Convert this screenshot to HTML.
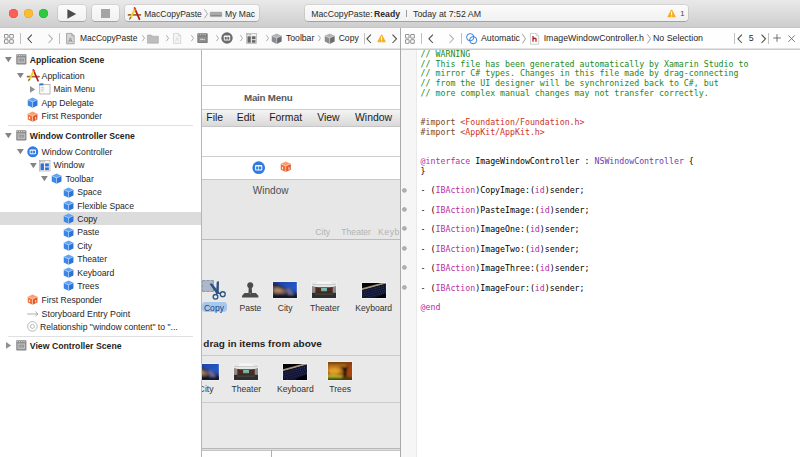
<!DOCTYPE html>
<html>
<head>
<meta charset="utf-8">
<title>Xcode</title>
<style>
html,body{margin:0;padding:0;}
body{width:800px;height:457px;overflow:hidden;background:#fff;position:relative;font-family:"Liberation Sans",sans-serif;font-size:8.7px;color:#2a2a2a;}
.abs{position:absolute;}
svg{display:block;overflow:visible;}
.pic{overflow:hidden;box-shadow:0 0 0 0.6px rgba(255,255,255,.55);}
.t{position:absolute;white-space:nowrap;line-height:14px;height:14px;}
#titlebar{left:0;top:0;width:800px;height:27px;background:linear-gradient(#e9e9e9,#cecece);border-bottom:1px solid #c6c6c6;}
.btn{position:absolute;top:5.2px;height:16.3px;border-radius:3.2px;background:linear-gradient(#fbfbfb,#f1f1f1);box-shadow:0 0 0 0.5px rgba(0,0,0,.16),0 0.8px 0.6px rgba(0,0,0,.22);box-sizing:border-box;}
#jumpL{left:0;top:28px;width:400px;height:20px;background:#fbfbfb;border-bottom:1px solid #e3e3e3;}
#jumpR{left:401px;top:28px;width:399px;height:20px;background:#fefefe;border-bottom:1px solid #e3e3e3;}
#outline{left:0;top:50px;width:201px;height:407px;background:#fff;}
#canvas{left:201px;top:50px;width:200px;height:407px;background:#fff;border-left:1px solid #b5b5b5;box-sizing:border-box;}
#gutter{left:401px;top:50px;width:16px;height:407px;background:#f6f6f6;border-right:1px solid #e9e9e9;box-sizing:border-box;}
pre{margin:0;position:absolute;left:420.6px;top:49.8px;font-family:"DejaVu Sans Mono","Liberation Mono",monospace;font-size:8.25px;line-height:9.75px;color:#000;}
.c{color:#1b8a1b}.k{color:#b630a0}.s{color:#cf3327}.n{color:#6a3db3}.p{color:#78492a}
</style>
</head>
<body>
<div id="titlebar" class="abs"></div>
<div class="abs" style="left:9.00px;top:9.00px;width:9.40px;height:9.40px;border-radius:50%;background:#fc5f58;box-shadow:inset 0 0 0 0.5px #e2453f;"></div>
<div class="abs" style="left:24.00px;top:9.00px;width:9.40px;height:9.40px;border-radius:50%;background:#fdbd30;box-shadow:inset 0 0 0 0.5px #dfa023;"></div>
<div class="abs" style="left:39.00px;top:9.00px;width:9.40px;height:9.40px;border-radius:50%;background:#2ac940;box-shadow:inset 0 0 0 0.5px #1dad2b;"></div>
<div class="btn" style="left:58.0px;width:27.5px"></div>
<div class="btn" style="left:91.5px;width:27.5px"></div>
<div class="btn" style="left:125.0px;width:134.0px"></div>
<div class="btn" style="left:305.0px;width:383.0px"></div>
<svg class="abs" style="left:67.00px;top:8.60px" width="9.50" height="10.00" viewBox="0 0 95 100"><path d="M4 2 L92 50 L4 98 Z" fill="#4b4b4b"/></svg>
<div class="abs" style="left:101.00px;top:9.30px;width:8.60px;height:8.60px;background:#a4a4a4;"></div>
<svg class="abs" style="left:127.90px;top:6.80px" width="12.80" height="12.80" viewBox="0 0 12 12"><path d="M0.4 7.4 H11.7" stroke="#9b6b3c" stroke-width="1.5" stroke-linecap="round"/><path d="M6.1 0.9 L10.7 11.4" stroke="#b3191c" stroke-width="1.6" stroke-linecap="round"/><path d="M6.6 1.6 L2.2 10.6" stroke="#efd02f" stroke-width="1.9"/><path d="M6.9 0.9 L6.2 2.4" stroke="#e2453c" stroke-width="1.9"/><path d="M2.5 10 L1.5 11.8 L1.9 9.7 Z" fill="#6b4a2a" stroke="#6b4a2a" stroke-width="0.5"/></svg>
<div class="t" style="left:144.30px;top:6.60px;font-size:8.49px;color:#2b2b2b;">MacCopyPaste</div>
<svg class="abs" style="left:203.80px;top:8.80px" width="4.00" height="9.60" viewBox="0 0 40 96"><path d="M4 2 L35 48 L4 94" fill="none" stroke="#9a9a9a" stroke-width="8"/></svg>
<svg class="abs" style="left:209.80px;top:12.20px" width="12.00" height="4.80" viewBox="0 0 120 48"><rect x="2" y="2" width="116" height="44" rx="6" fill="#a9a9a9" stroke="#858585" stroke-width="5"/><rect x="8" y="30" width="104" height="10" fill="#8a8a8a"/></svg>
<div class="t" style="left:225.00px;top:6.60px;font-size:8.57px;color:#2b2b2b;">My Mac</div>
<div class="t" style="left:311.30px;top:6.60px;font-size:8.70px;color:#2b2b2b;">MacCopyPaste: </div>
<div class="t" style="left:374.00px;top:6.60px;font-size:8.70px;font-weight:bold;color:#2b2b2b;">Ready</div>
<div class="abs" style="left:406.10px;top:9.70px;width:1.00px;height:7.60px;background:#9c9c9c;"></div>
<div class="t" style="left:413.00px;top:6.60px;font-size:8.80px;color:#2b2b2b;">Today at 7:52 AM</div>
<svg class="abs" style="left:667.20px;top:9.00px" width="9.20" height="8.90" viewBox="0 0 12 11.4"><path d="M6 0.7 Q6.6 0.7 6.9 1.3 L11.3 9.6 Q11.8 10.8 10.6 10.8 L1.4 10.8 Q0.2 10.8 0.7 9.6 L5.1 1.3 Q5.4 0.7 6 0.7 Z" fill="#f6ae24"/><path d="M6 3.6 V7.2" stroke="#fff" stroke-width="1.3" stroke-linecap="round"/><circle cx="6" cy="9" r="0.75" fill="#fff"/></svg>
<div class="t" style="left:680.20px;top:6.80px;font-size:7.60px;color:#444;">1</div>
<div id="jumpL" class="abs"></div>
<div id="jumpR" class="abs"></div>
<div class="abs" style="left:0.00px;top:49.00px;width:800.00px;height:1.00px;background:#cbcbcb;"></div>
<svg class="abs" style="left:4.20px;top:33.60px" width="9.80" height="9.80" viewBox="0 0 12 12"><g fill="none" stroke="#6a6a6a" stroke-width="0.9"><rect x="0.6" y="0.6" width="4.4" height="4.4" rx="0.35"/><rect x="7" y="0.6" width="4.4" height="4.4" rx="0.35"/><rect x="0.6" y="7" width="4.4" height="4.4" rx="0.35"/><rect x="7" y="7" width="4.4" height="4.4" rx="0.35"/></g></svg>
<div class="abs" style="left:20.00px;top:32.60px;width:1.00px;height:11.60px;background:#c0c0c0;"></div>
<svg class="abs" style="left:26.80px;top:33.60px" width="5.40" height="9.60" viewBox="0 0 5.4 9.6"><path d="M4.9 0.6 L0.9 4.8 L4.9 9.0" fill="none" stroke="#4a4a4a" stroke-width="1.05"/></svg>
<svg class="abs" style="left:48.00px;top:33.60px" width="5.40" height="9.60" viewBox="0 0 5.4 9.6"><path d="M0.5 0.6 L4.5 4.8 L0.5 9.0" fill="none" stroke="#b0b0b0" stroke-width="1.05"/></svg>
<div class="abs" style="left:59.20px;top:32.60px;width:1.00px;height:11.60px;background:#c0c0c0;"></div>
<svg class="abs" style="left:66.20px;top:32.80px" width="8.80" height="11.20" viewBox="0 0 88 112"><path d="M6 4 H58 L82 28 V108 H6 Z" fill="#d6d6d6" stroke="#8c8c8c" stroke-width="7"/><path d="M58 4 V28 H82" fill="none" stroke="#8c8c8c" stroke-width="6"/><path d="M26 92 L44 48 L62 92 M32 78 H56" fill="none" stroke="#8a8a8a" stroke-width="8"/></svg>
<div class="t" style="left:80.00px;top:31.40px;font-size:8.48px;color:#1f1f1f;">MacCopyPaste</div>
<svg class="abs" style="left:141.50px;top:35.20px" width="3.00" height="6.40" viewBox="0 0 30 64"><path d="M4 2 L25 32 L4 62" fill="none" stroke="#a6a6a6" stroke-width="9"/></svg>
<svg class="abs" style="left:147.00px;top:33.60px" width="11.80" height="9.60" viewBox="0 0 118 96"><path d="M4 10 H44 L54 22 H114 V92 H4 Z" fill="#bdbdbd" stroke="#9e9e9e" stroke-width="5"/></svg>
<svg class="abs" style="left:166.00px;top:35.20px" width="3.00" height="6.40" viewBox="0 0 30 64"><path d="M4 2 L25 32 L4 62" fill="none" stroke="#a6a6a6" stroke-width="9"/></svg>
<svg class="abs" style="left:173.00px;top:33.00px" width="8.20" height="10.80" viewBox="0 0 82 108"><path d="M5 4 H54 L77 27 V104 H5 Z" fill="#f4f4f4" stroke="#c4c4c4" stroke-width="6"/><path d="M54 4 V27 H77" fill="none" stroke="#c4c4c4" stroke-width="5"/><path d="M26 84 L41 46 L56 84" fill="none" stroke="#d0d0d0" stroke-width="6"/></svg>
<svg class="abs" style="left:191.00px;top:35.20px" width="3.00" height="6.40" viewBox="0 0 30 64"><path d="M4 2 L25 32 L4 62" fill="none" stroke="#a6a6a6" stroke-width="9"/></svg>
<svg class="abs" style="left:197.00px;top:33.20px" width="11.00" height="10.40" viewBox="0 0 110 104"><rect x="3" y="3" width="104" height="98" rx="8" fill="#7a7a7a"/><rect x="14" y="36" width="82" height="54" fill="#8f8f8f"/><path d="M14 18 H98" stroke="#e6e6e6" stroke-width="9" stroke-dasharray="9 8"/><path d="M34 64 H76" stroke="#f0f0f0" stroke-width="14" stroke-dasharray="12 6"/></svg>
<svg class="abs" style="left:215.50px;top:35.20px" width="3.00" height="6.40" viewBox="0 0 30 64"><path d="M4 2 L25 32 L4 62" fill="none" stroke="#a6a6a6" stroke-width="9"/></svg>
<svg class="abs" style="left:221.00px;top:32.20px" width="12.00" height="12.00" viewBox="0 0 12 12"><circle cx="6" cy="6" r="5.7" fill="#6b6b6b"/><rect x="2.8" y="3.5" width="6.4" height="5" rx="0.8" fill="#fff"/><rect x="3.7" y="4.9" width="2" height="2.7" fill="#6b6b6b"/><rect x="6.3" y="4.9" width="2" height="2.7" fill="#6b6b6b"/></svg>
<svg class="abs" style="left:240.30px;top:35.20px" width="3.00" height="6.40" viewBox="0 0 30 64"><path d="M4 2 L25 32 L4 62" fill="none" stroke="#a6a6a6" stroke-width="9"/></svg>
<svg class="abs" style="left:246.00px;top:33.00px" width="11.00" height="11.00" viewBox="0 0 12 12"><rect x="0.4" y="0.4" width="11.2" height="11.2" fill="#f1f1f1" stroke="#a8a8a8" stroke-width="0.7"/><circle cx="1.9" cy="1.8" r="0.55" fill="#777"/><circle cx="3.5" cy="1.8" r="0.55" fill="#777"/><circle cx="5.1" cy="1.8" r="0.55" fill="#777"/><rect x="1.6" y="3.6" width="3.6" height="7" fill="#666"/><rect x="6.4" y="3.6" width="4" height="3.2" fill="#666"/><rect x="6.4" y="7.8" width="4" height="2.8" fill="#666"/></svg>
<svg class="abs" style="left:265.50px;top:35.20px" width="3.00" height="6.40" viewBox="0 0 30 64"><path d="M4 2 L25 32 L4 62" fill="none" stroke="#a6a6a6" stroke-width="9"/></svg>
<svg class="abs" style="left:271.00px;top:32.80px" width="11.40" height="11.40" viewBox="0 0 12 12"><path d="M6 0.6 L11.2 2.9 L6 5.3 L0.8 2.9 Z" fill="#b4b4b4"/><path d="M0.8 2.9 L6 5.3 L6 11.5 L0.8 9 Z" fill="#8b8b8b"/><path d="M11.2 2.9 L6 5.3 L6 11.5 L11.2 9 Z" fill="#6c6c6c"/><path d="M0.8 2.9 L6 5.3 L11.2 2.9 M6 5.3 L6 11.5" stroke="#cfe4ff" stroke-width="0.75" fill="none" opacity="0.75"/></svg>
<div class="t" style="left:286.00px;top:31.40px;font-size:8.63px;color:#1f1f1f;">Toolbar</div>
<svg class="abs" style="left:318.00px;top:35.20px" width="3.00" height="6.40" viewBox="0 0 30 64"><path d="M4 2 L25 32 L4 62" fill="none" stroke="#a6a6a6" stroke-width="9"/></svg>
<svg class="abs" style="left:324.00px;top:32.80px" width="11.40" height="11.40" viewBox="0 0 12 12"><path d="M6 0.6 L11.2 2.9 L6 5.3 L0.8 2.9 Z" fill="#b4b4b4"/><path d="M0.8 2.9 L6 5.3 L6 11.5 L0.8 9 Z" fill="#8b8b8b"/><path d="M11.2 2.9 L6 5.3 L6 11.5 L11.2 9 Z" fill="#6c6c6c"/><path d="M0.8 2.9 L6 5.3 L11.2 2.9 M6 5.3 L6 11.5" stroke="#cfe4ff" stroke-width="0.75" fill="none" opacity="0.75"/></svg>
<div class="t" style="left:338.70px;top:31.40px;font-size:8.57px;color:#1f1f1f;">Copy</div>
<div class="abs" style="left:363.60px;top:32.60px;width:1.00px;height:11.60px;background:#c0c0c0;"></div>
<svg class="abs" style="left:366.20px;top:33.60px" width="5.40" height="9.60" viewBox="0 0 5.4 9.6"><path d="M4.9 0.6 L0.9 4.8 L4.9 9.0" fill="none" stroke="#4a4a4a" stroke-width="1.05"/></svg>
<svg class="abs" style="left:377.40px;top:33.90px" width="9.20" height="8.90" viewBox="0 0 12 11.4"><path d="M6 0.7 Q6.6 0.7 6.9 1.3 L11.3 9.6 Q11.8 10.8 10.6 10.8 L1.4 10.8 Q0.2 10.8 0.7 9.6 L5.1 1.3 Q5.4 0.7 6 0.7 Z" fill="#f6ae24"/><path d="M6 3.6 V7.2" stroke="#fff" stroke-width="1.3" stroke-linecap="round"/><circle cx="6" cy="9" r="0.75" fill="#fff"/></svg>
<svg class="abs" style="left:392.00px;top:33.60px" width="5.40" height="9.60" viewBox="0 0 5.4 9.6"><path d="M0.5 0.6 L4.5 4.8 L0.5 9.0" fill="none" stroke="#4a4a4a" stroke-width="1.05"/></svg>
<svg class="abs" style="left:405.40px;top:33.60px" width="9.80" height="9.80" viewBox="0 0 12 12"><g fill="none" stroke="#6a6a6a" stroke-width="0.9"><rect x="0.6" y="0.6" width="4.4" height="4.4" rx="0.35"/><rect x="7" y="0.6" width="4.4" height="4.4" rx="0.35"/><rect x="0.6" y="7" width="4.4" height="4.4" rx="0.35"/><rect x="7" y="7" width="4.4" height="4.4" rx="0.35"/></g></svg>
<div class="abs" style="left:421.00px;top:32.60px;width:1.00px;height:11.60px;background:#c0c0c0;"></div>
<svg class="abs" style="left:428.00px;top:33.60px" width="5.40" height="9.60" viewBox="0 0 5.4 9.6"><path d="M4.9 0.6 L0.9 4.8 L4.9 9.0" fill="none" stroke="#4a4a4a" stroke-width="1.05"/></svg>
<svg class="abs" style="left:449.00px;top:33.60px" width="5.40" height="9.60" viewBox="0 0 5.4 9.6"><path d="M0.5 0.6 L4.5 4.8 L0.5 9.0" fill="none" stroke="#b0b0b0" stroke-width="1.05"/></svg>
<div class="abs" style="left:461.00px;top:32.60px;width:1.00px;height:11.60px;background:#c0c0c0;"></div>
<svg class="abs" style="left:466.00px;top:32.80px" width="11.40" height="11.40" viewBox="0 0 114 114"><circle cx="42" cy="42" r="36" fill="none" stroke="#2f7be0" stroke-width="10"/><circle cx="72" cy="72" r="36" fill="none" stroke="#2f7be0" stroke-width="10"/></svg>
<div class="t" style="left:481.00px;top:31.40px;font-size:8.77px;color:#1f1f1f;">Automatic</div>
<svg class="abs" style="left:522.00px;top:33.60px" width="4.00" height="9.60" viewBox="0 0 40 96"><path d="M4 2 L35 48 L4 94" fill="none" stroke="#868686" stroke-width="8"/></svg>
<svg class="abs" style="left:530.40px;top:32.60px" width="9.20" height="11.60" viewBox="0 0 92 116"><path d="M5 4 H62 L87 29 V112 H5 Z" fill="#fff" stroke="#b0b0b0" stroke-width="6"/><path d="M62 4 V29 H87" fill="none" stroke="#b0b0b0" stroke-width="5"/><path d="M30 30 V88 M30 62 Q46 46 60 58 V88" fill="none" stroke="#b4202b" stroke-width="13"/></svg>
<div class="t" style="left:543.70px;top:31.40px;font-size:8.76px;color:#1f1f1f;">ImageWindowController.h</div>
<svg class="abs" style="left:647.00px;top:33.60px" width="4.00" height="9.60" viewBox="0 0 40 96"><path d="M4 2 L35 48 L4 94" fill="none" stroke="#868686" stroke-width="8"/></svg>
<div class="t" style="left:653.00px;top:31.40px;font-size:8.82px;color:#1f1f1f;">No Selection</div>
<div class="abs" style="left:733.60px;top:32.60px;width:1.00px;height:11.60px;background:#c0c0c0;"></div>
<svg class="abs" style="left:737.40px;top:33.60px" width="5.40" height="9.60" viewBox="0 0 5.4 9.6"><path d="M4.9 0.6 L0.9 4.8 L4.9 9.0" fill="none" stroke="#4a4a4a" stroke-width="1.05"/></svg>
<div class="t" style="left:748.80px;top:31.40px;font-size:8.80px;color:#2b2b2b;">5</div>
<svg class="abs" style="left:760.60px;top:33.60px" width="5.40" height="9.60" viewBox="0 0 5.4 9.6"><path d="M0.5 0.6 L4.5 4.8 L0.5 9.0" fill="none" stroke="#4a4a4a" stroke-width="1.05"/></svg>
<div class="abs" style="left:768.00px;top:32.60px;width:1.00px;height:11.60px;background:#c0c0c0;"></div>
<svg class="abs" style="left:773.00px;top:34.40px" width="8.00" height="8.00" viewBox="0 0 80 80"><path d="M40 2 V78 M2 40 H78" stroke="#5a5a5a" stroke-width="8.5"/></svg>
<svg class="abs" style="left:788.00px;top:34.80px" width="7.20" height="7.20" viewBox="0 0 72 72"><path d="M4 4 L68 68 M68 4 L4 68" stroke="#6a6a6a" stroke-width="9"/></svg>
<div id="outline" class="abs"></div>
<div class="abs" style="left:0.00px;top:212.20px;width:201.00px;height:13.20px;background:#dcdcdc;"></div>
<div class="abs" style="left:7.50px;top:125.20px;width:185.00px;height:1.00px;background:#e0e0e0;"></div>
<div class="abs" style="left:7.50px;top:335.90px;width:185.00px;height:1.00px;background:#e0e0e0;"></div>
<svg class="abs" style="left:5.20px;top:56.80px" width="6.80" height="5.20" viewBox="0 0 68 52"><path d="M0 0 L68 0 L34 52 Z" fill="#848484"/></svg>
<svg class="abs" style="left:15.80px;top:54.00px" width="10.70" height="10.70" viewBox="0 0 12 12"><rect x="0.3" y="0.3" width="11.4" height="11.4" rx="0.8" fill="#858585"/><rect x="1.7" y="3.8" width="8.6" height="6.5" fill="#bdbdbd"/><path d="M1.4 1.9 H10.6" stroke="#ececec" stroke-width="1.1" stroke-dasharray="1.1 0.9"/><rect x="3.1" y="5.4" width="5.8" height="3" fill="#8a8a8a"/><path d="M3.8 6.9 H8.2" stroke="#e8e8e8" stroke-width="0.9" stroke-dasharray="0.9 0.8"/></svg>
<div class="t" style="left:29.80px;top:52.70px;font-size:8.61px;font-weight:bold;color:#1f1f1f;">Application Scene</div>
<svg class="abs" style="left:17.40px;top:73.00px" width="6.80" height="5.20" viewBox="0 0 68 52"><path d="M0 0 L68 0 L34 52 Z" fill="#848484"/></svg>
<svg class="abs" style="left:26.90px;top:69.40px" width="12.40" height="12.40" viewBox="0 0 12 12"><path d="M0.4 7.4 H11.7" stroke="#9b6b3c" stroke-width="1.5" stroke-linecap="round"/><path d="M6.1 0.9 L10.7 11.4" stroke="#b3191c" stroke-width="1.6" stroke-linecap="round"/><path d="M6.6 1.6 L2.2 10.6" stroke="#efd02f" stroke-width="1.9"/><path d="M6.9 0.9 L6.2 2.4" stroke="#e2453c" stroke-width="1.9"/><path d="M2.5 10 L1.5 11.8 L1.9 9.7 Z" fill="#6b4a2a" stroke="#6b4a2a" stroke-width="0.5"/></svg>
<div class="t" style="left:41.60px;top:68.60px;font-size:8.81px;color:#262626;">Application</div>
<svg class="abs" style="left:30.40px;top:85.60px" width="5.20" height="6.80" viewBox="0 0 52 68"><path d="M0 0 L52 34 L0 68 Z" fill="#909090"/></svg>
<svg class="abs" style="left:39.00px;top:82.80px" width="11.60" height="11.60" viewBox="0 0 12 12"><rect x="0.8" y="1.6" width="10.6" height="9.8" fill="#fbfbfb" stroke="#9a9a9a" stroke-width="0.7"/><rect x="0.4" y="0.4" width="4.2" height="2" fill="#2f74d8"/><path d="M2.2 4.6 H5 M2.2 6.4 H5.6 M2.2 8.2 H4.6" stroke="#b5b5b5" stroke-width="0.7"/></svg>
<div class="t" style="left:53.60px;top:82.00px;font-size:8.35px;color:#262626;">Main Menu</div>
<svg class="abs" style="left:27.30px;top:97.10px" width="11.20" height="11.20" viewBox="0 0 12 12"><path d="M6 0.6 L11.2 2.9 L6 5.3 L0.8 2.9 Z" fill="#62a5f2"/><path d="M0.8 2.9 L6 5.3 L6 11.5 L0.8 9 Z" fill="#3c86e8"/><path d="M11.2 2.9 L6 5.3 L6 11.5 L11.2 9 Z" fill="#2b74da"/><path d="M0.8 2.9 L6 5.3 L11.2 2.9 M6 5.3 L6 11.5" stroke="#cfe4ff" stroke-width="0.75" fill="none" opacity="0.75"/></svg>
<div class="t" style="left:41.60px;top:95.80px;font-size:8.60px;color:#262626;">App Delegate</div>
<svg class="abs" style="left:27.30px;top:110.50px" width="11.20" height="11.20" viewBox="0 0 12 12"><path d="M6 0.6 L11.2 2.9 L6 5.3 L0.8 2.9 Z" fill="#f7a072"/><path d="M0.8 2.9 L6 5.3 L6 11.5 L0.8 9 Z" fill="#f0703a"/><path d="M11.2 2.9 L6 5.3 L6 11.5 L11.2 9 Z" fill="#e2572a"/><path d="M0.8 2.9 L6 5.3 L11.2 2.9 M6 5.3 L6 11.5" stroke="#ffe3d3" stroke-width="0.7" fill="none" opacity="0.85"/><path d="M2.6 6.2 L2.6 8.6 M8.6 7.2 L9.4 6.8 L9.4 9.2" stroke="#fff" stroke-width="0.9" fill="none"/></svg>
<div class="t" style="left:41.60px;top:109.20px;font-size:8.53px;color:#262626;">First Responder</div>
<svg class="abs" style="left:5.20px;top:132.70px" width="6.80" height="5.20" viewBox="0 0 68 52"><path d="M0 0 L68 0 L34 52 Z" fill="#848484"/></svg>
<svg class="abs" style="left:15.80px;top:129.90px" width="10.70" height="10.70" viewBox="0 0 12 12"><rect x="0.3" y="0.3" width="11.4" height="11.4" rx="0.8" fill="#858585"/><rect x="1.7" y="3.8" width="8.6" height="6.5" fill="#bdbdbd"/><path d="M1.4 1.9 H10.6" stroke="#ececec" stroke-width="1.1" stroke-dasharray="1.1 0.9"/><rect x="3.1" y="5.4" width="5.8" height="3" fill="#8a8a8a"/><path d="M3.8 6.9 H8.2" stroke="#e8e8e8" stroke-width="0.9" stroke-dasharray="0.9 0.8"/></svg>
<div class="t" style="left:29.80px;top:128.60px;font-size:8.68px;font-weight:bold;color:#1f1f1f;">Window Controller Scene</div>
<svg class="abs" style="left:17.40px;top:149.40px" width="6.80" height="5.20" viewBox="0 0 68 52"><path d="M0 0 L68 0 L34 52 Z" fill="#848484"/></svg>
<svg class="abs" style="left:26.60px;top:146.20px" width="11.60" height="11.60" viewBox="0 0 12 12"><circle cx="6" cy="6" r="5.7" fill="#2f7be0"/><rect x="2.8" y="3.5" width="6.4" height="5" rx="0.8" fill="#fff"/><rect x="3.7" y="4.9" width="2" height="2.7" fill="#2f7be0"/><rect x="6.3" y="4.9" width="2" height="2.7" fill="#2f7be0"/></svg>
<div class="t" style="left:41.60px;top:145.00px;font-size:8.69px;color:#262626;">Window Controller</div>
<svg class="abs" style="left:29.60px;top:162.80px" width="6.80" height="5.20" viewBox="0 0 68 52"><path d="M0 0 L68 0 L34 52 Z" fill="#848484"/></svg>
<svg class="abs" style="left:39.30px;top:159.60px" width="11.40" height="11.40" viewBox="0 0 12 12"><rect x="0.4" y="0.4" width="11.2" height="11.2" fill="#f4f4f4" stroke="#a8a8a8" stroke-width="0.7"/><circle cx="1.9" cy="1.8" r="0.6" fill="#e0443e"/><circle cx="3.6" cy="1.8" r="0.6" fill="#e0a030"/><circle cx="5.3" cy="1.8" r="0.6" fill="#3aa845"/><rect x="1.6" y="3.6" width="3.6" height="7" fill="#2f6fd6"/><rect x="6.4" y="3.6" width="4" height="3.2" fill="#2f6fd6"/><rect x="6.4" y="7.8" width="4" height="2.8" fill="#2f6fd6"/></svg>
<div class="t" style="left:53.60px;top:158.40px;font-size:8.66px;color:#262626;">Window</div>
<svg class="abs" style="left:41.40px;top:176.20px" width="6.80" height="5.20" viewBox="0 0 68 52"><path d="M0 0 L68 0 L34 52 Z" fill="#848484"/></svg>
<svg class="abs" style="left:51.20px;top:173.10px" width="11.20" height="11.20" viewBox="0 0 12 12"><path d="M6 0.6 L11.2 2.9 L6 5.3 L0.8 2.9 Z" fill="#62a5f2"/><path d="M0.8 2.9 L6 5.3 L6 11.5 L0.8 9 Z" fill="#3c86e8"/><path d="M11.2 2.9 L6 5.3 L6 11.5 L11.2 9 Z" fill="#2b74da"/><path d="M0.8 2.9 L6 5.3 L11.2 2.9 M6 5.3 L6 11.5" stroke="#cfe4ff" stroke-width="0.75" fill="none" opacity="0.75"/></svg>
<div class="t" style="left:65.40px;top:171.80px;font-size:8.66px;color:#262626;">Toolbar</div>
<svg class="abs" style="left:63.10px;top:186.50px" width="11.20" height="11.20" viewBox="0 0 12 12"><path d="M6 0.6 L11.2 2.9 L6 5.3 L0.8 2.9 Z" fill="#62a5f2"/><path d="M0.8 2.9 L6 5.3 L6 11.5 L0.8 9 Z" fill="#3c86e8"/><path d="M11.2 2.9 L6 5.3 L6 11.5 L11.2 9 Z" fill="#2b74da"/><path d="M0.8 2.9 L6 5.3 L11.2 2.9 M6 5.3 L6 11.5" stroke="#cfe4ff" stroke-width="0.75" fill="none" opacity="0.75"/></svg>
<div class="t" style="left:77.20px;top:185.20px;font-size:8.66px;color:#262626;">Space</div>
<svg class="abs" style="left:63.10px;top:199.90px" width="11.20" height="11.20" viewBox="0 0 12 12"><path d="M6 0.6 L11.2 2.9 L6 5.3 L0.8 2.9 Z" fill="#62a5f2"/><path d="M0.8 2.9 L6 5.3 L6 11.5 L0.8 9 Z" fill="#3c86e8"/><path d="M11.2 2.9 L6 5.3 L6 11.5 L11.2 9 Z" fill="#2b74da"/><path d="M0.8 2.9 L6 5.3 L11.2 2.9 M6 5.3 L6 11.5" stroke="#cfe4ff" stroke-width="0.75" fill="none" opacity="0.75"/></svg>
<div class="t" style="left:77.20px;top:198.60px;font-size:8.66px;color:#262626;">Flexible Space</div>
<svg class="abs" style="left:63.10px;top:213.30px" width="11.20" height="11.20" viewBox="0 0 12 12"><path d="M6 0.6 L11.2 2.9 L6 5.3 L0.8 2.9 Z" fill="#62a5f2"/><path d="M0.8 2.9 L6 5.3 L6 11.5 L0.8 9 Z" fill="#3c86e8"/><path d="M11.2 2.9 L6 5.3 L6 11.5 L11.2 9 Z" fill="#2b74da"/><path d="M0.8 2.9 L6 5.3 L11.2 2.9 M6 5.3 L6 11.5" stroke="#cfe4ff" stroke-width="0.75" fill="none" opacity="0.75"/></svg>
<div class="t" style="left:77.20px;top:212.00px;font-size:8.66px;color:#262626;">Copy</div>
<svg class="abs" style="left:63.10px;top:226.70px" width="11.20" height="11.20" viewBox="0 0 12 12"><path d="M6 0.6 L11.2 2.9 L6 5.3 L0.8 2.9 Z" fill="#62a5f2"/><path d="M0.8 2.9 L6 5.3 L6 11.5 L0.8 9 Z" fill="#3c86e8"/><path d="M11.2 2.9 L6 5.3 L6 11.5 L11.2 9 Z" fill="#2b74da"/><path d="M0.8 2.9 L6 5.3 L11.2 2.9 M6 5.3 L6 11.5" stroke="#cfe4ff" stroke-width="0.75" fill="none" opacity="0.75"/></svg>
<div class="t" style="left:77.20px;top:225.40px;font-size:8.66px;color:#262626;">Paste</div>
<svg class="abs" style="left:63.10px;top:240.10px" width="11.20" height="11.20" viewBox="0 0 12 12"><path d="M6 0.6 L11.2 2.9 L6 5.3 L0.8 2.9 Z" fill="#62a5f2"/><path d="M0.8 2.9 L6 5.3 L6 11.5 L0.8 9 Z" fill="#3c86e8"/><path d="M11.2 2.9 L6 5.3 L6 11.5 L11.2 9 Z" fill="#2b74da"/><path d="M0.8 2.9 L6 5.3 L11.2 2.9 M6 5.3 L6 11.5" stroke="#cfe4ff" stroke-width="0.75" fill="none" opacity="0.75"/></svg>
<div class="t" style="left:77.20px;top:238.80px;font-size:8.66px;color:#262626;">City</div>
<svg class="abs" style="left:63.10px;top:253.50px" width="11.20" height="11.20" viewBox="0 0 12 12"><path d="M6 0.6 L11.2 2.9 L6 5.3 L0.8 2.9 Z" fill="#62a5f2"/><path d="M0.8 2.9 L6 5.3 L6 11.5 L0.8 9 Z" fill="#3c86e8"/><path d="M11.2 2.9 L6 5.3 L6 11.5 L11.2 9 Z" fill="#2b74da"/><path d="M0.8 2.9 L6 5.3 L11.2 2.9 M6 5.3 L6 11.5" stroke="#cfe4ff" stroke-width="0.75" fill="none" opacity="0.75"/></svg>
<div class="t" style="left:77.20px;top:252.20px;font-size:8.66px;color:#262626;">Theater</div>
<svg class="abs" style="left:63.10px;top:266.90px" width="11.20" height="11.20" viewBox="0 0 12 12"><path d="M6 0.6 L11.2 2.9 L6 5.3 L0.8 2.9 Z" fill="#62a5f2"/><path d="M0.8 2.9 L6 5.3 L6 11.5 L0.8 9 Z" fill="#3c86e8"/><path d="M11.2 2.9 L6 5.3 L6 11.5 L11.2 9 Z" fill="#2b74da"/><path d="M0.8 2.9 L6 5.3 L11.2 2.9 M6 5.3 L6 11.5" stroke="#cfe4ff" stroke-width="0.75" fill="none" opacity="0.75"/></svg>
<div class="t" style="left:77.20px;top:265.60px;font-size:8.66px;color:#262626;">Keyboard</div>
<svg class="abs" style="left:63.10px;top:280.30px" width="11.20" height="11.20" viewBox="0 0 12 12"><path d="M6 0.6 L11.2 2.9 L6 5.3 L0.8 2.9 Z" fill="#62a5f2"/><path d="M0.8 2.9 L6 5.3 L6 11.5 L0.8 9 Z" fill="#3c86e8"/><path d="M11.2 2.9 L6 5.3 L6 11.5 L11.2 9 Z" fill="#2b74da"/><path d="M0.8 2.9 L6 5.3 L11.2 2.9 M6 5.3 L6 11.5" stroke="#cfe4ff" stroke-width="0.75" fill="none" opacity="0.75"/></svg>
<div class="t" style="left:77.20px;top:279.00px;font-size:8.66px;color:#262626;">Trees</div>
<svg class="abs" style="left:27.30px;top:293.90px" width="11.20" height="11.20" viewBox="0 0 12 12"><path d="M6 0.6 L11.2 2.9 L6 5.3 L0.8 2.9 Z" fill="#f7a072"/><path d="M0.8 2.9 L6 5.3 L6 11.5 L0.8 9 Z" fill="#f0703a"/><path d="M11.2 2.9 L6 5.3 L6 11.5 L11.2 9 Z" fill="#e2572a"/><path d="M0.8 2.9 L6 5.3 L11.2 2.9 M6 5.3 L6 11.5" stroke="#ffe3d3" stroke-width="0.7" fill="none" opacity="0.85"/><path d="M2.6 6.2 L2.6 8.6 M8.6 7.2 L9.4 6.8 L9.4 9.2" stroke="#fff" stroke-width="0.9" fill="none"/></svg>
<div class="t" style="left:41.60px;top:292.60px;font-size:8.53px;color:#262626;">First Responder</div>
<svg class="abs" style="left:26.90px;top:310.70px" width="11.40" height="6.00" viewBox="0 0 114 60"><path d="M2 30 H108 M84 6 L110 30 L84 54" fill="none" stroke="#8a8a8a" stroke-width="7"/></svg>
<div class="t" style="left:41.60px;top:306.70px;font-size:8.81px;color:#262626;">Storyboard Entry Point</div>
<!--rel-->
<svg class="abs" style="left:26.90px;top:321.40px" width="10.80" height="10.80" viewBox="0 0 108 108"><circle cx="54" cy="54" r="48" fill="none" stroke="#9a9a9a" stroke-width="7"/><circle cx="54" cy="54" r="20" fill="none" stroke="#9a9a9a" stroke-width="7"/></svg>
<div class="t" style="left:40.00px;top:319.80px;font-size:8.65px;color:#262626;">Relationship "window content" to "...</div>
<svg class="abs" style="left:6.00px;top:342.10px" width="5.20" height="6.80" viewBox="0 0 52 68"><path d="M0 0 L52 34 L0 68 Z" fill="#909090"/></svg>
<svg class="abs" style="left:15.80px;top:340.10px" width="10.70" height="10.70" viewBox="0 0 12 12"><rect x="0.3" y="0.3" width="11.4" height="11.4" rx="0.8" fill="#858585"/><rect x="1.7" y="3.8" width="8.6" height="6.5" fill="#bdbdbd"/><path d="M1.4 1.9 H10.6" stroke="#ececec" stroke-width="1.1" stroke-dasharray="1.1 0.9"/><rect x="3.1" y="5.4" width="5.8" height="3" fill="#8a8a8a"/><path d="M3.8 6.9 H8.2" stroke="#e8e8e8" stroke-width="0.9" stroke-dasharray="0.9 0.8"/></svg>
<div class="t" style="left:29.80px;top:338.80px;font-size:8.71px;font-weight:bold;color:#1f1f1f;">View Controller Scene</div>
<div id="canvas" class="abs"></div>
<div class="abs" style="left:202.00px;top:85.40px;width:198.50px;height:1.00px;background:#cdcdcd;"></div>
<div class="t" style="left:244.00px;top:90.60px;font-size:9.75px;font-weight:bold;color:#585858;letter-spacing:-0.22px;">Main Menu</div>
<div class="abs" style="left:202.00px;top:109.00px;width:198.50px;height:18.00px;background:linear-gradient(#f4f4f4,#d9d9d9);border-top:1px solid #cdcdcd;border-bottom:1px solid #c6c6c6;box-sizing:border-box;"></div>
<div class="t" style="left:206.30px;top:110.90px;font-size:10.45px;color:#1c1c1c;">File</div>
<div class="t" style="left:236.80px;top:110.90px;font-size:10.45px;color:#1c1c1c;">Edit</div>
<div class="t" style="left:269.20px;top:110.90px;font-size:10.45px;color:#1c1c1c;">Format</div>
<div class="t" style="left:317.20px;top:110.90px;font-size:10.45px;color:#1c1c1c;">View</div>
<div class="t" style="left:355.00px;top:110.90px;font-size:10.45px;color:#1c1c1c;">Window</div>
<div class="abs" style="left:202.00px;top:155.60px;width:198.50px;height:1.00px;background:#cfcfcf;"></div>
<svg class="abs" style="left:251.70px;top:160.50px" width="13.40" height="13.40" viewBox="0 0 12 12"><circle cx="6" cy="6" r="5.7" fill="#2f7be0"/><rect x="2.8" y="3.5" width="6.4" height="5" rx="0.8" fill="#fff"/><rect x="3.7" y="4.9" width="2" height="2.7" fill="#2f7be0"/><rect x="6.3" y="4.9" width="2" height="2.7" fill="#2f7be0"/></svg>
<svg class="abs" style="left:280.20px;top:161.40px" width="11.60" height="11.60" viewBox="0 0 12 12"><path d="M6 0.6 L11.2 2.9 L6 5.3 L0.8 2.9 Z" fill="#f7a072"/><path d="M0.8 2.9 L6 5.3 L6 11.5 L0.8 9 Z" fill="#f0703a"/><path d="M11.2 2.9 L6 5.3 L6 11.5 L11.2 9 Z" fill="#e2572a"/><path d="M0.8 2.9 L6 5.3 L11.2 2.9 M6 5.3 L6 11.5" stroke="#ffe3d3" stroke-width="0.7" fill="none" opacity="0.85"/><path d="M2.6 6.2 L2.6 8.6 M8.6 7.2 L9.4 6.8 L9.4 9.2" stroke="#fff" stroke-width="0.9" fill="none"/></svg>
<div class="abs" style="left:202.00px;top:178.60px;width:198.50px;height:1.00px;background:#c9c9c9;"></div>
<div class="abs" style="left:202.00px;top:179.60px;width:198.50px;height:60.00px;background:#e7e7e7;"></div>
<div class="t" style="left:252.80px;top:183.60px;font-size:10.04px;color:#4d4d4d;">Window</div>
<div class="t" style="left:315.20px;top:224.80px;font-size:8.71px;color:#b3b3b3;">City</div>
<div class="t" style="left:341.30px;top:224.80px;font-size:8.62px;color:#b3b3b3;">Theater</div>
<div class="t" style="left:378px;top:224.8px;width:22.3px;overflow:hidden;font-size:8.7px;letter-spacing:0.5px;color:#b3b3b3;">Keyboard</div>
<div class="abs" style="left:202.00px;top:239.20px;width:198.50px;height:1.20px;background:#bcbcbc;"></div>
<div class="abs" style="left:202.00px;top:240.40px;width:198.50px;height:208.00px;background:#e9e9e9;"></div>
<div class="abs" style="left:201.60px;top:280.40px;width:12.60px;height:11.40px;background:#adb7c6;border:0.6px dashed #8e9bb0;box-sizing:border-box;border-radius:1px;"></div>
<svg class="abs" style="left:198.00px;top:276.00px" width="70.00" height="40.00" viewBox="0 0 800 457"><path d="M133 92 L160 84 L243 188 L214 208 Z" fill="#2c5381"/><path d="M214 66 L240 60 L237 204 L206 204 Z" fill="#2c5381"/><circle cx="200" cy="238" r="27" fill="none" stroke="#2c5381" stroke-width="15"/><circle cx="283" cy="208" r="28" fill="none" stroke="#2c5381" stroke-width="15"/><path d="M226 196 L258 200" stroke="#2c5381" stroke-width="16"/><circle cx="597" cy="106" r="34" fill="#4b4b4b"/><path d="M580 128 H614 L618 200 H576 Z" fill="#4b4b4b"/><path d="M532 194 H662 L690 226 V246 H503 V226 Z" fill="#4b4b4b"/><path d="M586 196 L597 208 L608 196 Z" fill="#9a9a9a"/></svg>
<div class="abs pic" style="left:273.40px;top:282.20px;width:23.80px;height:16.20px;"><svg style="position:absolute;left:0.00px;top:0" width="23.80" height="16.20" viewBox="0 0 240 164" preserveAspectRatio="none"><defs><linearGradient id="sky" x1="0" y1="0" x2="1" y2="1"><stop offset="0" stop-color="#1c3f9e"/><stop offset="0.6" stop-color="#2557c8"/><stop offset="1" stop-color="#1d3f9a"/></linearGradient><filter id="bl" x="-20%" y="-20%" width="140%" height="140%"><feGaussianBlur stdDeviation="10.5"/></filter></defs><rect width="240" height="164" fill="url(#sky)"/><g filter="url(#bl)"><path d="M-10 10 L30 14 L70 36 L110 56 L135 66 L160 58 L200 96 L250 124 V170 H-10 Z" fill="#23223a"/><path d="M0 50 L50 48 L100 66 L140 84 L120 118 L40 122 L0 112 Z" fill="#7d6050"/><path d="M14 70 L60 66 L96 84 L84 104 L20 102 Z" fill="#b08a68"/><path d="M130 72 L162 62 L196 100 L210 132 L150 128 Z" fill="#6c6a94"/><path d="M-10 132 H250 V170 H-10 Z" fill="#10121f"/></g></svg></div>
<div class="abs pic" style="left:312.10px;top:282.20px;width:24.10px;height:16.20px;"><svg style="position:absolute;left:0.00px;top:0" width="24.10" height="16.20" viewBox="0 0 242 164" preserveAspectRatio="none"><defs><filter id="bl2" x="-20%" y="-20%" width="140%" height="140%"><feGaussianBlur stdDeviation="5"/></filter></defs><rect width="242" height="164" fill="#cfcfcf"/><g filter="url(#bl2)"><path d="M-10 -10 H252 V50 L176 58 H66 L-10 50 Z" fill="#e6e6e6"/><ellipse cx="121" cy="14" rx="80" ry="16" fill="#f6f6f6"/><path d="M-10 20 H252 V30 H-10 Z" fill="#c9c9c9"/><path d="M-10 46 L66 54 H176 L252 46 V118 H-10 Z" fill="#4f2a22"/><path d="M-10 40 L34 52 V108 L-10 120 Z M252 40 L208 52 V108 L252 120 Z" fill="#8f8c8a"/><rect x="92" y="60" width="58" height="34" fill="#72bfc3"/><rect x="100" y="76" width="42" height="16" fill="#7bb07a"/><path d="M-10 110 H252 V174 H-10 Z" fill="#2e2e2e"/><path d="M30 118 H212 V128 H30 Z" fill="#4a4a4a"/><path d="M50 98 H192 V112 H50 Z" fill="#3c2a28"/></g></svg></div>
<div class="abs pic" style="left:362.10px;top:282.50px;width:24.00px;height:15.80px;"><svg style="position:absolute;left:0.00px;top:0" width="24.00" height="15.80" viewBox="0 0 240 158" preserveAspectRatio="none"><defs><filter id="bl3" x="-20%" y="-20%" width="140%" height="140%"><feGaussianBlur stdDeviation="5"/></filter></defs><rect width="240" height="158" fill="#050509"/><g filter="url(#bl3)"><path d="M-10 56 L250 -14 V6 L-10 76 Z" fill="#a3957f"/><path d="M-10 76 L250 6 V100 L80 168 H-10 Z" fill="#11132c"/><path d="M0 92 L240 26 M0 112 L240 48 M10 132 L240 70 M40 148 L240 92" stroke="#5f74e6" stroke-width="7" stroke-dasharray="7 13" opacity="0.75"/><path d="M90 168 L250 104 V168 Z" fill="#040407"/></g></svg></div>
<div class="abs" style="left:201.80px;top:302.40px;width:25.10px;height:10.00px;background:#a7c8ed;border-radius:3.4px;"></div>
<div class="t" style="left:203.90px;top:300.70px;font-size:8.62px;color:#1d437e;">Copy</div>
<div class="t" style="left:239.40px;top:300.70px;font-size:8.62px;color:#333;">Paste</div>
<div class="t" style="left:277.70px;top:300.70px;font-size:8.62px;color:#333;">City</div>
<div class="t" style="left:310.00px;top:300.70px;font-size:8.62px;color:#333;">Theater</div>
<div class="t" style="left:355.30px;top:300.70px;font-size:8.62px;color:#333;">Keyboard</div>
<div class="t" style="left:203.30px;top:336.70px;font-size:9.98px;font-weight:bold;color:#1f1f1f;">drag in items from above</div>
<div class="abs" style="left:202.00px;top:355.40px;width:198.50px;height:1.00px;background:#cbcbcb;"></div>
<div class="abs pic" style="left:202.00px;top:363.60px;width:17.00px;height:16.20px;"><svg style="position:absolute;left:-6.80px;top:0" width="23.80" height="16.20" viewBox="0 0 240 164" preserveAspectRatio="none"><defs><linearGradient id="sky" x1="0" y1="0" x2="1" y2="1"><stop offset="0" stop-color="#1c3f9e"/><stop offset="0.6" stop-color="#2557c8"/><stop offset="1" stop-color="#1d3f9a"/></linearGradient><filter id="bl" x="-20%" y="-20%" width="140%" height="140%"><feGaussianBlur stdDeviation="10.5"/></filter></defs><rect width="240" height="164" fill="url(#sky)"/><g filter="url(#bl)"><path d="M-10 10 L30 14 L70 36 L110 56 L135 66 L160 58 L200 96 L250 124 V170 H-10 Z" fill="#23223a"/><path d="M0 50 L50 48 L100 66 L140 84 L120 118 L40 122 L0 112 Z" fill="#7d6050"/><path d="M14 70 L60 66 L96 84 L84 104 L20 102 Z" fill="#b08a68"/><path d="M130 72 L162 62 L196 100 L210 132 L150 128 Z" fill="#6c6a94"/><path d="M-10 132 H250 V170 H-10 Z" fill="#10121f"/></g></svg></div>
<div class="abs pic" style="left:234.00px;top:363.60px;width:24.10px;height:16.20px;"><svg style="position:absolute;left:0.00px;top:0" width="24.10" height="16.20" viewBox="0 0 242 164" preserveAspectRatio="none"><defs><filter id="bl2" x="-20%" y="-20%" width="140%" height="140%"><feGaussianBlur stdDeviation="5"/></filter></defs><rect width="242" height="164" fill="#cfcfcf"/><g filter="url(#bl2)"><path d="M-10 -10 H252 V50 L176 58 H66 L-10 50 Z" fill="#e6e6e6"/><ellipse cx="121" cy="14" rx="80" ry="16" fill="#f6f6f6"/><path d="M-10 20 H252 V30 H-10 Z" fill="#c9c9c9"/><path d="M-10 46 L66 54 H176 L252 46 V118 H-10 Z" fill="#4f2a22"/><path d="M-10 40 L34 52 V108 L-10 120 Z M252 40 L208 52 V108 L252 120 Z" fill="#8f8c8a"/><rect x="92" y="60" width="58" height="34" fill="#72bfc3"/><rect x="100" y="76" width="42" height="16" fill="#7bb07a"/><path d="M-10 110 H252 V174 H-10 Z" fill="#2e2e2e"/><path d="M30 118 H212 V128 H30 Z" fill="#4a4a4a"/><path d="M50 98 H192 V112 H50 Z" fill="#3c2a28"/></g></svg></div>
<div class="abs pic" style="left:283.00px;top:363.80px;width:24.00px;height:15.80px;"><svg style="position:absolute;left:0.00px;top:0" width="24.00" height="15.80" viewBox="0 0 240 158" preserveAspectRatio="none"><defs><filter id="bl3" x="-20%" y="-20%" width="140%" height="140%"><feGaussianBlur stdDeviation="5"/></filter></defs><rect width="240" height="158" fill="#050509"/><g filter="url(#bl3)"><path d="M-10 56 L250 -14 V6 L-10 76 Z" fill="#a3957f"/><path d="M-10 76 L250 6 V100 L80 168 H-10 Z" fill="#11132c"/><path d="M0 92 L240 26 M0 112 L240 48 M10 132 L240 70 M40 148 L240 92" stroke="#5f74e6" stroke-width="7" stroke-dasharray="7 13" opacity="0.75"/><path d="M90 168 L250 104 V168 Z" fill="#040407"/></g></svg></div>
<div class="abs pic" style="left:328.00px;top:362.10px;width:24.10px;height:18.40px;"><svg style="position:absolute;left:0.00px;top:0" width="24.10" height="18.40" viewBox="0 0 242 184" preserveAspectRatio="none"><defs><filter id="bl4" x="-20%" y="-20%" width="140%" height="140%"><feGaussianBlur stdDeviation="10.5"/></filter></defs><rect width="242" height="184" fill="#8e4c10"/><g filter="url(#bl4)"><ellipse cx="90" cy="60" rx="100" ry="60" fill="#b9741a"/><ellipse cx="60" cy="92" rx="60" ry="34" fill="#e0a02a"/><path d="M190 -10 H252 V150 H200 Z" fill="#a8450f"/><path d="M-10 -10 H252 V24 H-10 Z" fill="#7a4310"/><path d="M120 40 Q160 70 156 170 H186 Q178 90 210 40 Q170 60 120 40 Z" fill="#24140a"/><path d="M-10 150 H252 V194 H-10 Z" fill="#4a3c10"/><path d="M-10 128 L130 132 L150 150 L-10 156 Z" fill="#d7cf3a"/><path d="M-10 140 L120 144 L140 158 L-10 160 Z" fill="#8fa21e"/></g></svg></div>
<div class="t" style="left:202px;top:382px;width:14px;overflow:hidden;font-size:8.7px;color:#333;"><span style="margin-left:-3.4px">City</span></div>
<div class="t" style="left:231.40px;top:382.00px;font-size:8.62px;color:#333;">Theater</div>
<div class="t" style="left:276.90px;top:382.00px;font-size:8.62px;color:#333;">Keyboard</div>
<div class="t" style="left:329.30px;top:382.00px;font-size:8.62px;color:#333;">Trees</div>
<div class="abs" style="left:202.00px;top:402.40px;width:198.50px;height:1.00px;background:#cbcbcb;"></div>
<div class="abs" style="left:202.00px;top:448.00px;width:198.50px;height:1.00px;background:#b7b7b7;"></div>
<div class="abs" style="left:202.00px;top:449.00px;width:198.50px;height:1.00px;background:#dedede;"></div>
<div class="abs" style="left:202.00px;top:450.00px;width:198.50px;height:1.00px;background:#c4c4c4;"></div>
<div class="abs" style="left:202.00px;top:451.00px;width:198.50px;height:6.00px;background:#fff;"></div>
<div class="abs" style="left:271.00px;top:450.00px;width:1.20px;height:7.00px;background:#b0b0b0;"></div>
<div class="abs" style="left:400.30px;top:28.00px;width:1.00px;height:429.00px;background:#a9a9a9;"></div>
<div id="gutter" class="abs"></div>
<svg class="abs" style="left:402.40px;top:187.60px" width="4.80" height="4.80" viewBox="0 0 48 48"><circle cx="24" cy="24" r="19" fill="#b4b4b4" stroke="#959595" stroke-width="7"/></svg>
<svg class="abs" style="left:402.40px;top:207.00px" width="4.80" height="4.80" viewBox="0 0 48 48"><circle cx="24" cy="24" r="19" fill="#b4b4b4" stroke="#959595" stroke-width="7"/></svg>
<svg class="abs" style="left:402.40px;top:226.40px" width="4.80" height="4.80" viewBox="0 0 48 48"><circle cx="24" cy="24" r="19" fill="#b4b4b4" stroke="#959595" stroke-width="7"/></svg>
<svg class="abs" style="left:402.40px;top:245.90px" width="4.80" height="4.80" viewBox="0 0 48 48"><circle cx="24" cy="24" r="19" fill="#b4b4b4" stroke="#959595" stroke-width="7"/></svg>
<svg class="abs" style="left:402.40px;top:265.40px" width="4.80" height="4.80" viewBox="0 0 48 48"><circle cx="24" cy="24" r="19" fill="#b4b4b4" stroke="#959595" stroke-width="7"/></svg>
<svg class="abs" style="left:402.40px;top:284.90px" width="4.80" height="4.80" viewBox="0 0 48 48"><circle cx="24" cy="24" r="19" fill="#b4b4b4" stroke="#959595" stroke-width="7"/></svg>
<pre><span class="c">// WARNING
// This file has been generated automatically by Xamarin Studio to
// mirror C# types. Changes in this file made by drag-connecting
// from the UI designer will be synchronized back to C#, but
// more complex manual changes may not transfer correctly.</span>


<span class="p">#import </span><span class="s">&lt;Foundation/Foundation.h&gt;</span>
<span class="p">#import </span><span class="s">&lt;AppKit/AppKit.h&gt;</span>


<span class="k">@interface</span> ImageWindowController : <span class="n">NSWindowController</span> {
}

- (<span class="k">IBAction</span>)CopyImage:(<span class="k">id</span>)sender;

- (<span class="k">IBAction</span>)PasteImage:(<span class="k">id</span>)sender;

- (<span class="k">IBAction</span>)ImageOne:(<span class="k">id</span>)sender;

- (<span class="k">IBAction</span>)ImageTwo:(<span class="k">id</span>)sender;

- (<span class="k">IBAction</span>)ImageThree:(<span class="k">id</span>)sender;

- (<span class="k">IBAction</span>)ImageFour:(<span class="k">id</span>)sender;

<span class="k">@end</span></pre>
</body>
</html>
